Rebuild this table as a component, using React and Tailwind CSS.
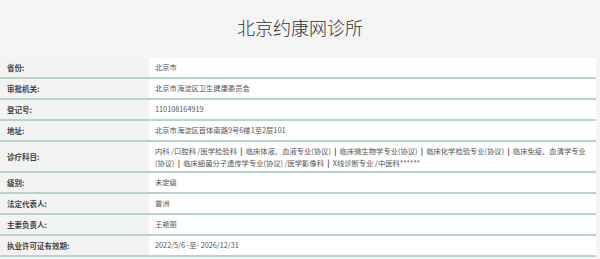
import React from "react";

const P = () => <span className="font-bold text-[#333]">|</span>;

const rows = [
  ["省份:", "北京市"],
  ["审批机关:", "北京市海淀区卫生健康委员会"],
  ["登记号:", "110108164919"],
  ["地址:", "北京市海淀区首体南路9号6楼1至2层101"],
  [
    "诊疗科目:",
    [
      <>
        内科 /口腔科 /医学检验科  <P />  临床体液、血液专业(协议)  <P />  临床微生物学专业(协议)  <P />  临床化学检验专业(协议)  <P />  临床免疫、血清学专业
      </>,
      <>
        (协议)  <P />  临床细菌分子遗传学专业(协议) /医学影像科  <P />  X线诊断专业 /中医科******
      </>,
    ],
  ],
  ["级别:", "未定级"],
  ["法定代表人:", "曾洲"],
  ["主要负责人:", "王艳丽"],
  ["执业许可证有效期:", "2022/5/6 -至- 2026/12/31"],
];

export default function App() {
  return (
    <div
      className="w-[600px] h-[259px] bg-[#f5f5f5] overflow-hidden"
      style={{ fontFamily: '"Noto Sans CJK SC", "Noto Sans", sans-serif' }}
    >
      <div className="h-[58px] flex items-center justify-center pb-[4px]">
        <h1 className="text-[18px] font-light text-[#333] leading-none">
          北京约康网诊所
        </h1>
      </div>
      <div className="w-[596px]">
        {rows.map(([label, value], i) => {
          const multi = Array.isArray(value);
          return (
            <div
              key={i}
              className={`flex border-b-2 border-[#b9d2ca] ${multi ? "h-[31px]" : "h-[21px]"}`}
            >
              <div className="w-[149px] shrink-0 bg-[#f3f3f3] pl-[7px] flex items-center text-[7.5px] font-bold text-[#444]">
                {label}
              </div>
              <div className="flex-1 bg-white pl-[6px] flex items-center text-[7.3px] text-[#555] whitespace-pre">
                {multi ? (
                  <div className="leading-[12px]">
                    <div>{value[0]}</div>
                    <div>{value[1]}</div>
                  </div>
                ) : (
                  value
                )}
              </div>
            </div>
          );
        })}
      </div>
    </div>
  );
}
